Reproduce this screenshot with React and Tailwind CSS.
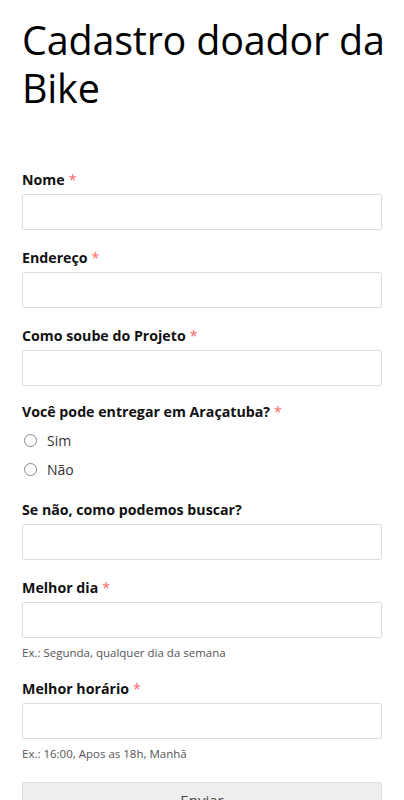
import React from "react";

const font = { fontFamily: '"Open Sans", "Noto Sans", sans-serif' };

function Label({ children, required }) {
  return (
    <div className="h-5 leading-5 text-[14.2px] font-bold text-[#111] mb-1">
      {children}
      {required && <span className="text-[#f66] font-normal ml-1">*</span>}
    </div>
  );
}

function Input() {
  return (
    <input
      type="text"
      className="block w-full h-9 border border-[#ddd] rounded-[2px] bg-white outline-none"
    />
  );
}

function Radio({ label }) {
  return (
    <label className="flex items-center h-[29px] text-[14px] text-[#333]">
      <span className="inline-block w-[13px] h-[13px] rounded-full border border-[#888] ml-[2px] mr-[10px]" />
      {label}
    </label>
  );
}

export default function App() {
  return (
    <div className="bg-white min-h-[800px] px-[22px] text-[#111]" style={font}>
      <h1 className="pt-4 mr-[-12px] text-[39.5px] leading-[48px] font-normal text-black tracking-[-0.2px]">
        Cadastro doador da Bike
      </h1>
      <form className="mt-[58px]">
        <div className="mb-[18px]">
          <Label required>Nome</Label>
          <Input />
        </div>
        <div className="mb-[18px]">
          <Label required>Endereço</Label>
          <Input />
        </div>
        <div className="mb-[16px]">
          <Label required>Como soube do Projeto</Label>
          <Input />
        </div>
        <div className="mb-[16px]">
          <Label required>Você pode entregar em Araçatuba?</Label>
          <div className="mt-[2px]">
            <Radio label="Sim" />
            <Radio label="Não" />
          </div>
        </div>
        <div className="mb-[18px] mt-[14px]">
          <Label>Se não, como podemos buscar?</Label>
          <Input />
        </div>
        <div className="mb-[18px]">
          <Label required>Melhor dia</Label>
          <Input />
          <div className="mt-[7px] text-[11.5px] leading-4 text-[#555]">
            Ex.: Segunda, qualquer dia da semana
          </div>
        </div>
        <div className="mb-[20px] mt-[1px]">
          <Label required>Melhor horário</Label>
          <Input />
          <div className="mt-[7px] text-[11.5px] leading-4 text-[#555]">
            Ex.: 16:00, Apos as 18h, Manhã
          </div>
        </div>
        <button
          type="button"
          className="block w-full h-9 border border-[#ddd] bg-[#eee] text-[15px] text-[#444] rounded-[2px]"
        >
          Enviar
        </button>
      </form>
    </div>
  );
}
